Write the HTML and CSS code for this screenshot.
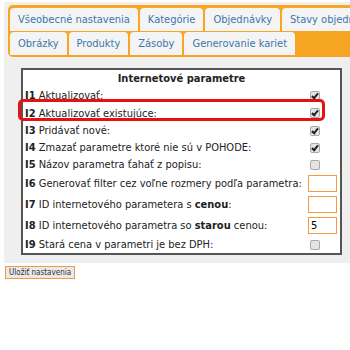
FILE: index.html
```html
<!DOCTYPE html>
<html lang="sk">
<head>
  <meta charset="UTF-8" />
  <title>Nastavenia</title>
  <link rel="stylesheet" href="styles.css">
</head>
<body>

<div class="panel">
  <div class="tabs">
    <div class="tab-row">
      <div class="tab">Všeobecné nastavenia</div>
      <div class="tab">Kategórie</div>
      <div class="tab">Objednávky</div>
      <div class="tab">Stavy objednávok</div>
    </div>
    <div class="tab-row">
      <div class="tab">Obrázky</div>
      <div class="tab">Produkty</div>
      <div class="tab">Zásoby</div>
      <div class="tab">Generovanie kariet</div>
    </div>
  </div>

  <div class="params-wrap">
    <table class="params">
      <tr class="head"><th colspan="2">Internetové parametre</th></tr>
      <tr><td><b>I1</b> Aktualizovať:</td><td><span class="cb on"></span></td></tr>
      <tr class="r2"><td><b>I2</b> Aktualizovať existujúce:</td><td><span class="cb on"></span></td></tr>
      <tr><td><b>I3</b> Pridávať nové:</td><td><span class="cb on"></span></td></tr>
      <tr><td><b>I4</b> Zmazať parametre ktoré nie sú v POHODE:</td><td><span class="cb on"></span></td></tr>
      <tr><td><b>I5</b> Názov parametra ťahať z popisu:</td><td><span class="cb"></span></td></tr>
      <tr class="inp"><td><b>I6</b> Generovať filter cez voľne rozmery podľa parametra:</td><td><input type="text" value=""></td></tr>
      <tr class="inp"><td><b>I7</b> ID internetového parametera s <b>cenou</b>:</td><td><input type="text" value=""></td></tr>
      <tr class="inp"><td><b>I8</b> ID internetového parametra so <b>starou</b> cenou:</td><td><input type="text" value="5"></td></tr>
      <tr><td><b>I9</b> Stará cena v parametri je bez DPH:</td><td><span class="cb"></span></td></tr>
    </table>
    <div class="highlight"></div>
  </div>
</div>

<button class="save-btn">Uložiť nastavenia</button>

</body>
</html>
```

FILE: styles.css
```css
body {
  margin: 0;
  background: white;
  font-family: 'DejaVu Sans Condensed', 'DejaVu Sans', sans-serif;
  font-size: 11px;
  color: #222;
}
.panel {
  background: #efefef;
  margin: 2px 0 0 4px;
  padding: 3px 0 8px 0;
  overflow: hidden;
}
.tabs {
  margin-left: 4px;
  background: #f6a623;
  border-radius: 5px 0 0 5px;
  padding: 3px 0 2px 2px;
  display: flex;
  flex-direction: column;
  gap: 1px;
  width: 400px;
}
.tab-row {
  display: flex;
  gap: 2px;
}
.tab {
  background: #f4f4f4;
  border-radius: 4px 4px 0 0;
  height: 23px;
  line-height: 23px;
  padding: 0 8px;
  color: #3a78ad;
  white-space: nowrap;
}
.params-wrap {
  position: relative;
  margin: 11px 0 0 17px;
  width: 321px;
}
.params {
  width: 100%;
  border: 2px solid #555;
  border-collapse: collapse;
  background: white;
}
.params td {
  padding: 0 2px;
  height: 17px;
  white-space: nowrap;
}
.params td:last-child {
  width: 30px;
  padding-left: 2px;
}
.params th {
  height: 15px;
  font-weight: bold;
  text-align: center;
}
.params tr.r2 td { height: 18px; }
.params tr.inp td { height: 21px; }
.params input {
  box-sizing: border-box;
  width: 29px;
  height: 17px;
  border: 1px solid #f29a3c;
  outline: none;
  padding: 1px 2px;
  font: inherit;
  font-size: 11px;
  display: block;
  background: white;
}
.cb {
  display: block;
  width: 8px;
  height: 8px;
  margin-left: 2px;
  border: 1px solid #aaa;
  border-radius: 2px;
  background: #e4e4e4;
  position: relative;
}
.cb.on::after {
  content: '';
  position: absolute;
  left: 2px;
  top: 0px;
  width: 2px;
  height: 5px;
  border: solid #222;
  border-width: 0 2px 2px 0;
  transform: rotate(40deg);
}
.highlight {
  position: absolute;
  left: -3px;
  top: 31px;
  width: 301px;
  height: 16px;
  border: 3px solid #e81010;
  border-radius: 5px;
}
.save-btn {
  margin: 3px 0 0 5px;
  background: #e9e9e9;
  border: 1px solid #f29a3c;
  font-family: 'DejaVu Sans Condensed', 'DejaVu Sans', sans-serif;
  font-size: 8px;
  padding: 0 3px;
  height: 13px;
  line-height: 11px;
  color: #333;
}
```
